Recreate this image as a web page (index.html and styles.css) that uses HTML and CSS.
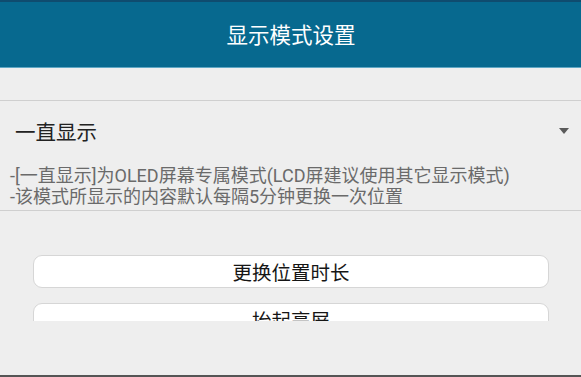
FILE: index.html
```html
<!DOCTYPE html>
<html lang="zh-CN">
<head>
    <meta charset="UTF-8">
    <meta name="viewport" content="width=device-width, initial-scale=1.0">
    <title>显示模式设置</title>
    <link rel="stylesheet" href="styles.css">
</head>
<body>
    <div class="screen">
        <header class="title-bar">显示模式设置</header>
        <div class="mode-section">
            <div class="mode-select">
                <span>一直显示</span>
                <span class="arrow"></span>
            </div>
            <div class="mode-desc">
                <p>-[一直显示]为OLED屏幕专属模式(LCD屏建议使用其它显示模式)</p>
                <p>-该模式所显示的内容默认每隔5分钟更换一次位置</p>
            </div>
        </div>
        <div class="options">
            <button class="option">更换位置时长</button>
            <button class="option">抬起亮屏</button>
        </div>
        <div class="bottom-line"></div>
    </div>
</body>
</html>
```

FILE: styles.css
```css
body {
    margin: 0;
    padding: 0;
    background-color: #eeeeee;
    font-family: Roboto, "Noto Sans CJK SC", sans-serif;
}
.screen {
    height: 377px;
    display: flex;
    flex-direction: column;
    overflow: hidden;
}
.title-bar {
    height: 62px;
    border-top: 2px solid #0f4c6f;
    border-bottom: 1px solid #5fa7c4;
    background-color: #07698f;
    color: #ffffff;
    font-size: 21.5px;
    display: flex;
    align-items: center;
    justify-content: center;
    padding: 0 0 3px 1px;
}
.mode-section {
    margin-top: 32px;
    border-top: 1px solid #cfcfcf;
    border-bottom: 1px solid #cfcfcf;
}
.mode-select {
    height: 59px;
    display: flex;
    align-items: center;
    justify-content: space-between;
    padding: 0 12px 0 15px;
    font-size: 20.5px;
    color: #222222;
}
.arrow {
    width: 0;
    height: 0;
    border-left: 5px solid transparent;
    border-right: 5px solid transparent;
    border-top: 6px solid #5a5a5a;
}
.mode-desc {
    padding: 5px 10px 3px;
    color: #6a6a6a;
    font-size: 18px;
    line-height: 21px;
}
.mode-desc p {
    margin: 0;
}
.options {
    height: 66px;
    margin-top: 44px;
    padding: 0 32px 0 33px;
    display: flex;
    flex-direction: column;
    gap: 15px;
    overflow: hidden;
}
.option {
    flex: none;
    height: 33px;
    background-color: #ffffff;
    border: 1px solid #d6d6d6;
    border-radius: 9px;
    font-family: Roboto, "Noto Sans CJK SC", sans-serif;
    font-size: 19.5px;
    color: #151515;
    padding: 0;
}
.bottom-line {
    margin-top: auto;
    height: 2px;
    background-color: #555555;
}
```
